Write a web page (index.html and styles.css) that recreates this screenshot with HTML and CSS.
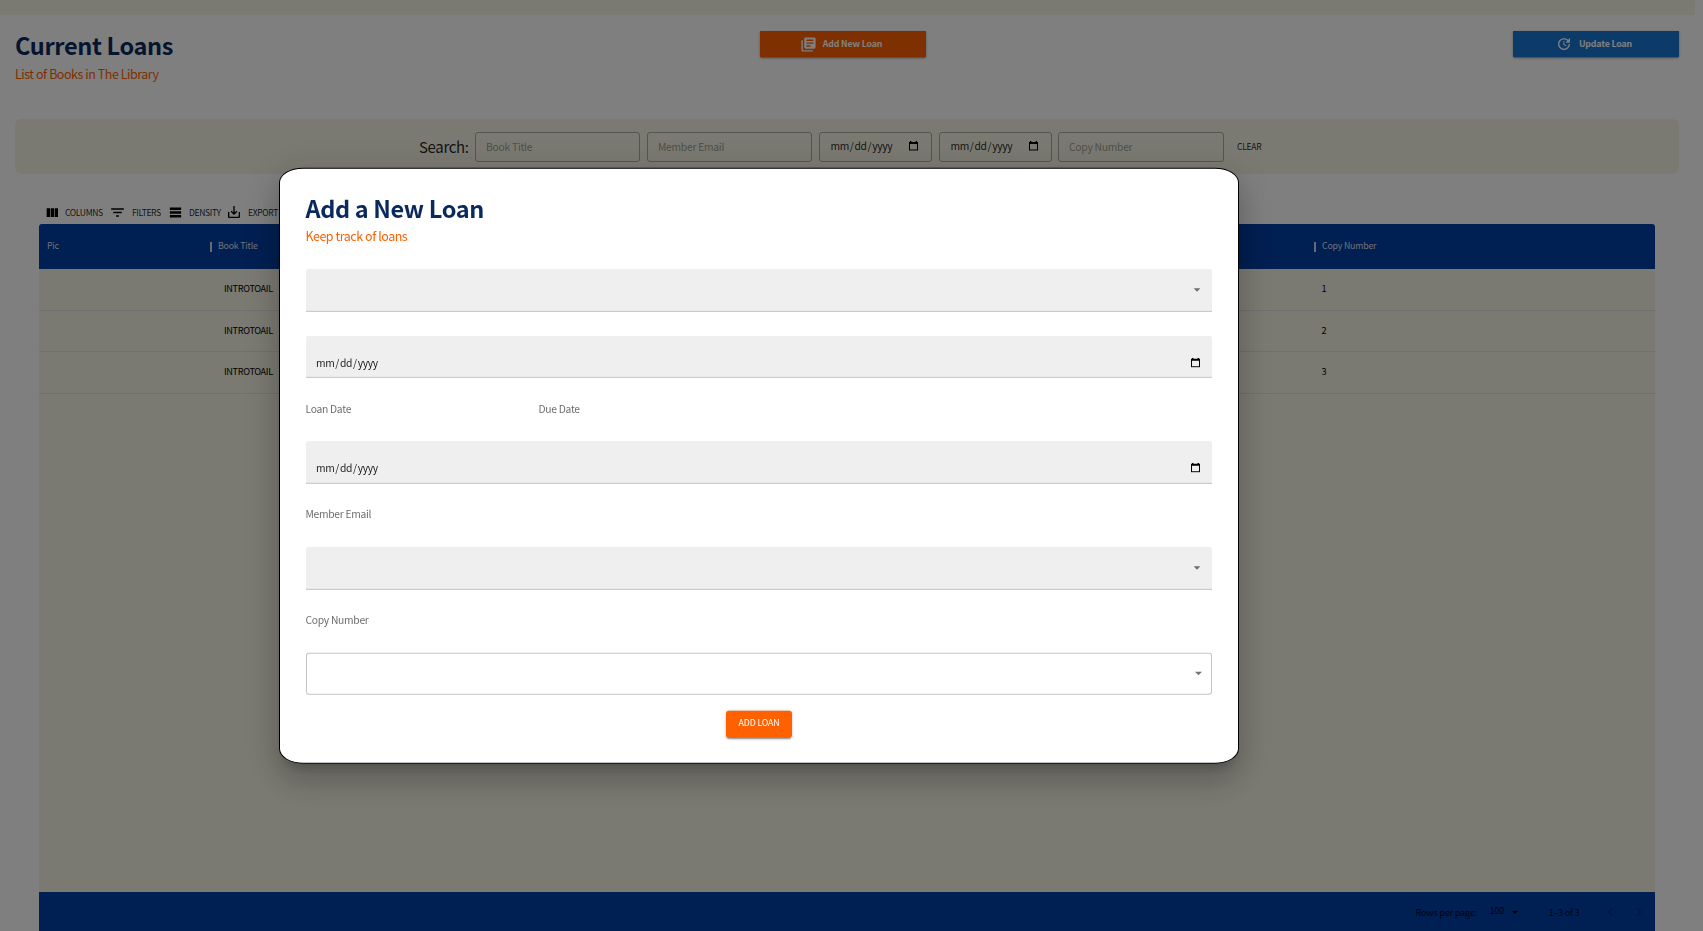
FILE: index.html
```html
<!DOCTYPE html>
<html lang="en">
<head>
<meta charset="utf-8">
<title>Current Loans</title>
<link rel="stylesheet" href="styles.css">
</head>
<body>
<svg width="0" height="0" class="sprite" aria-hidden="true">
  <symbol id="calendar" viewBox="0 0 9 10"><path d="M1 0h1.4v1h4.2V0H8v1h1v8.6H0V1h1zM1 3v5.6h7V3z" fill-rule="evenodd"/></symbol>
  <symbol id="drop" viewBox="0 0 24 24"><path d="M7 10l5 5 5-5z"/></symbol>
</svg>
<div class="page">
  <div class="strip"></div>
  <header class="head">
    <div class="titles">
      <h1 class="title">Current Loans</h1>
      <p class="sub">List of Books in The Library</p>
    </div>
    <button class="action orange"><svg class="i-books" viewBox="0 0 24 24"><path d="M4 6H2v14c0 1.1.9 2 2 2h14v-2H4V6zm16-4H8c-1.1 0-2 .9-2 2v12c0 1.1.9 2 2 2h12c1.1 0 2-.9 2-2V4c0-1.1-.9-2-2-2zm-1 9H9V9h10v2zm-4 4H9v-2h6v2zm4-8H9V5h10v2z"/></svg><span>Add New Loan</span></button>
    <button class="action blue"><svg class="i-update" viewBox="0 0 24 24"><path d="M21 10.12h-6.78l2.74-2.82c-2.73-2.7-7.15-2.8-9.88-.1-2.73 2.71-2.73 7.08 0 9.79s7.15 2.71 9.88 0C18.32 15.65 19 14.08 19 12.1h2c0 1.98-.88 4.55-2.64 6.29-3.51 3.48-9.21 3.48-12.72 0-3.5-3.47-3.53-9.11-.02-12.58s9.14-3.47 12.65 0L21 3v7.12zM12.5 8v4.25l3.5 2.08-.72 1.21L11 13V8h1.5z"/></svg><span>Update Loan</span></button>
  </header>
  <section class="search">
    <span class="search-label">Search:</span>
    <div class="box wide">Book Title</div>
    <div class="box wide">Member Email</div>
    <div class="box date"><span class="mdy"><span>mm</span><span>/</span><span>dd</span><span>/</span><span>yyyy</span></span><svg class="cal"><use href="#calendar"/></svg></div>
    <div class="box date"><span class="mdy"><span>mm</span><span>/</span><span>dd</span><span>/</span><span>yyyy</span></span><svg class="cal"><use href="#calendar"/></svg></div>
    <div class="box wide copy">Copy Number</div>
    <span class="clear">CLEAR</span>
  </section>
  <section class="grid">
    <div class="tools">
      <span class="tool t1"><svg viewBox="0 0 24 24"><path d="M10 18h5V5h-5v13zm-6 0h5V5H4v13zM16 5v13h5V5h-5z"/></svg>COLUMNS</span>
      <span class="tool t2"><svg viewBox="0 0 24 24"><path d="M10 18h4v-2h-4v2zM3 6v2h18V6H3zm3 7h12v-2H6v2z"/></svg>FILTERS</span>
      <span class="tool t3"><svg viewBox="0 0 24 24"><path d="M21,8H3V4h18V8z M21,10H3v4h18V10z M21,16H3v4h18V16z"/></svg>DENSITY</span>
      <span class="tool t4"><svg viewBox="0 0 24 24"><path d="M19 12v7H5v-7H3v7c0 1.1.9 2 2 2h14c1.1 0 2-.9 2-2v-7h-2zm-6 .67l2.59-2.58L17 11.5l-5 5-5-5 1.41-1.41L11 12.67V3h2z"/></svg>EXPORT</span>
    </div>
    <div class="thead"><span class="c1">Pic</span><i class="sep"></i><span class="c2">Book Title</span><i class="sep"></i><span>Copy Number</span></div>
    <div class="row"><span class="r1">INTROTOAIL</span><span>1</span></div>
    <div class="row"><span class="r1">INTROTOAIL</span><span>2</span></div>
    <div class="row"><span class="r1">INTROTOAIL</span><span>3</span></div>
    <div class="void"></div>
    <footer class="foot">
      <span class="rpp">Rows per page:</span><span class="hundred">100</span><svg class="fdrop"><use href="#drop"/></svg><span class="range">1–3 of 3</span>
      <svg class="chev" viewBox="0 0 24 24"><path d="M15.41 7.41L14 6l-6 6 6 6 1.41-1.41L10.83 12z"/></svg>
      <svg class="chev" viewBox="0 0 24 24"><path d="M10 6L8.59 7.41 13.17 12l-4.58 4.59L10 18l6-6z"/></svg>
    </footer>
  </section>
</div>
<div class="backdrop"></div>
<main class="modal">
  <h2 class="title">Add a New Loan</h2>
  <p class="sub">Keep track of loans</p>
  <div class="field first"><svg class="drop"><use href="#drop"/></svg></div>
  <div class="field second dated"><span class="mdy"><span>mm</span><span>/</span><span>dd</span><span>/</span><span>yyyy</span></span><svg class="cal"><use href="#calendar"/></svg></div>
  <div class="labels"><span class="loan">Loan Date</span><span>Due Date</span></div>
  <div class="field dated"><span class="mdy"><span>mm</span><span>/</span><span>dd</span><span>/</span><span>yyyy</span></span><svg class="cal"><use href="#calendar"/></svg></div>
  <div class="labels">Member Email</div>
  <div class="field"><svg class="drop"><use href="#drop"/></svg></div>
  <div class="labels">Copy Number</div>
  <div class="field outlined"><svg class="drop"><use href="#drop"/></svg></div>
  <button class="submit">ADD LOAN</button>
</main>
</body>
</html>
```
FILE: styles.css
```css
* { box-sizing: border-box; }
body {
  margin: 0;
  overflow: hidden;
  background: #fff;
  color: rgba(0, 0, 0, .87);
  font-family: "Noto Sans CJK SC", "Noto Sans CJK JP", sans-serif;
}
h1, h2, p { margin: 0; }
button { border: 0; padding: 0; font-family: inherit; }
svg { display: block; flex: none; fill: currentColor; }
.sprite { position: absolute; }
.page { height: 931px; display: flex; flex-direction: column; }
.strip { height: 15px; width: 1695px; background: #f7f5e5; }
.head {
  height: 104px; width: 1664px; margin-left: 15px; padding-top: 16px;
  display: grid; grid-template-columns: 745px 166px 1fr; align-items: start;
}
.titles { margin-top: -1px; }
.titles .sub { margin-top: 3px; }
.title { font-size: 23.5px; line-height: 31px; font-weight: 700; letter-spacing: -.34px; color: #0a2a5e; }
.sub { font-size: 12.5px; line-height: 20px; letter-spacing: -.5px; word-spacing: .2px; color: #ff6000; }
.action {
  width: 166px; height: 26px; display: flex; align-items: center; justify-content: center;
  color: #fff; font-size: 8.8px; font-weight: 700; line-height: 14px; letter-spacing: -.14px; padding-right: 4px;
  box-shadow: 0 2px 1px -1px rgba(0,0,0,.2), 0 1px 2px rgba(0,0,0,.2), 0 1px 4px rgba(0,0,0,.12);
}
.orange { background: #ff6000; }
.blue { background: #1976d2; justify-self: end; }
.i-books { width: 17px; height: 17px; margin-right: 6px; }
.i-update { width: 16px; height: 16px; margin-right: 7px; }
.search {
  width: 1664px; height: 55px; margin-left: 15px; padding: 13px 0 0 404px;
  border-radius: 6px; background: #f7f5e5; display: flex;
}
.search-label { width: 56px; font-size: 15px; line-height: 30px; letter-spacing: -.35px; }
.box {
  height: 30px; margin-right: 7px; padding: 0 0 1px 10px; display: flex; align-items: center;
  border: 1px solid rgba(0,0,0,.3); border-radius: 3px; font-size: 10.3px; letter-spacing: -.25px; color: rgba(0,0,0,.4);
}
.wide { width: 165px; }
.copy { width: 166px; }
.date { width: 113px; justify-content: space-between; padding: 0 13px 2px 10.5px; }
.date + .date { margin-right: 6px; }
.mdy { display: flex; gap: 1px; font-size: 10.3px; line-height: 16px; letter-spacing: -.38px; color: rgba(0,0,0,.87); }
.cal { width: 9px; height: 10px; color: #000; }
.clear { margin-left: 6px; font-size: 8.6px; line-height: 28px; letter-spacing: -.3px; }
.grid { width: 1616px; margin-left: 39px; flex: 1; display: flex; flex-direction: column; }
.tools { height: 50px; padding: 30px 0 0 5px; display: flex; align-items: flex-start; line-height: 16px; font-size: 8.6px; letter-spacing: -.38px; }
.tool { height: 16px; display: flex; align-items: center; }
.tool svg { width: 16px; height: 16px; color: #000; }
.t1 { width: 65px; } .tool.t1 svg { margin: 1px 5.5px 0 -.5px; }
.t2 { width: 59px; } .tool.t2 svg { width: 17px; height: 17px; margin-right: 6px; }
.t3 { width: 58px; } .tool.t3 svg { width: 15px; height: 15px; margin-right: 6px; }
.t4 svg { margin-right: 6px; }
.thead {
  height: 45px; padding-left: 8px; display: flex; align-items: center; background: #003ea4;
  border-radius: 3px 3px 0 0; color: rgba(255,255,255,.87); font-size: 8.8px; letter-spacing: -.2px;
}
.thead span { margin-top: -2px; }
.c1 { width: 163px; }
.c2 { width: 1096px; }
.sep { width: 2px; height: 10px; margin-right: 6px; background: rgba(255,255,255,.8); }
.row {
  height: 41.6px; padding: 0 0 2px 185px; display: flex; align-items: center; background: #f7f5e5;
  border-bottom: 1px solid #e0e0e0; font-size: 9.2px; letter-spacing: -.37px; color: #000;
}
.r1 { width: 1097.5px; }
.void { flex: 1; background: #f7f5e5; }
.foot {
  height: 39px; padding: 0 0 0 1376.5px; display: flex; align-items: center;
  background: #003ea4; font-size: 9.2px; letter-spacing: -.25px;
}
.foot > * { flex: none; }
.rpp { width: 74px; }
.hundred { width: 17px; margin-top: -3px; }
.fdrop { width: 16px; height: 16px; margin-right: 26px; }
.range { width: 53px; }
.chev { width: 16px; height: 16px; margin-right: 13px; color: rgba(0,0,0,.3); }
.backdrop { position: fixed; inset: 0; background: rgba(0,0,0,.5); }
.modal {
  position: fixed; left: 279px; top: 50%; width: 960px; height: 596.6px; transform: translateY(-50%);
  padding: 24px 26px 0; border: 1px solid #000; border-radius: 2.5%; background: #fff;
  box-shadow: 0 9px 12px -6px rgba(0,0,0,.2), 0 19px 30px 2px rgba(0,0,0,.14), 0 7px 37px 6px rgba(0,0,0,.12);
}
.modal .sub { margin-top: 2.2px; }
.modal .title, .modal .sub { margin-left: -.5px; }
.field {
  height: 42.6px; padding: 0 7px; display: flex; align-items: center; justify-content: flex-end;
  background: #efefef; border-bottom: 1px solid #a3a3a3; border-radius: 3px 3px 0 0;
}
.first { margin-top: 23.4px; }
.second { margin-top: 24.2px; }
.dated { justify-content: space-between; padding: 12px 12px 0 10px; }
.drop { width: 16px; height: 16px; color: rgba(0,0,0,.54); }
.labels {
  height: 63px; margin-left: -.5px; padding-bottom: 3.5px; display: flex; align-items: center;
  font-size: 10.3px; letter-spacing: -.28px; color: rgba(0,0,0,.6);
}
.loan { width: 233px; }
.outlined { padding-right: 4px; background: #fff; border: 1px solid rgba(0,0,0,.23); border-radius: 3px; }
.outlined .drop { width: 17px; height: 17px; }
.submit {
  display: block; width: 66px; height: 27px; margin: 15.3px auto 0; padding-bottom: 3px;
  border-radius: 3px; background: #ff6000; color: #fff; font-size: 8.8px; line-height: 16px; letter-spacing: -.14px;
  box-shadow: 0 2px 1px -1px rgba(0,0,0,.2), 0 1px 2px rgba(0,0,0,.2), 0 1px 4px rgba(0,0,0,.12);
}
```
